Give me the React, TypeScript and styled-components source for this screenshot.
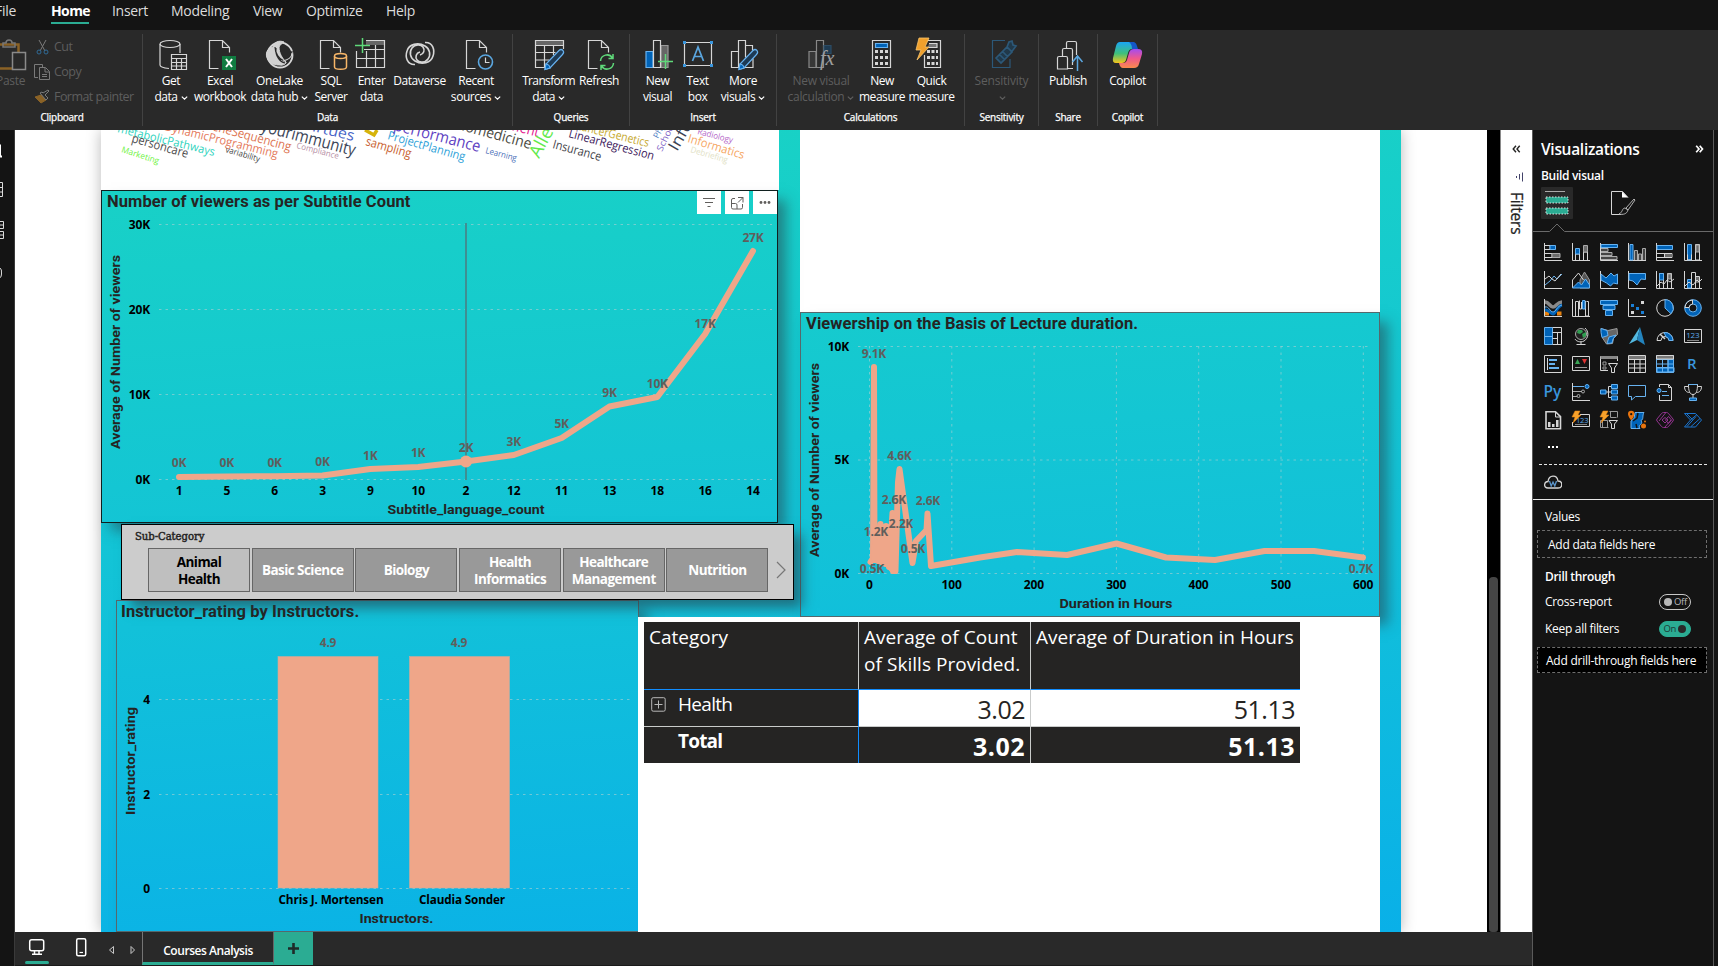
import React from "react";
import styled, { createGlobalStyle } from "styled-components";

const GlobalStyle = createGlobalStyle`
  * { box-sizing: border-box; }
  html, body { margin: 0; background: #141414; overflow: hidden; }
  body { font-family: "Open Sans", "Noto Sans", sans-serif; }
  svg { display: block; }
`;

const ui = `"Open Sans", "Noto Sans", sans-serif`;
const din = `Roboto, "Liberation Sans", sans-serif`;
const L = "#d6d6d6";
const B = "#0063b8";
const C = "#67b2f0";
const G = "#6b6b6b";
const salmon = "#efa689";

/* ---------- shell ---------- */
const Shell = styled.div`
  width: 1718px;
  height: 966px;
  display: flex;
  flex-direction: column;
  overflow: hidden;
  background: #141414;
`;
const MenuBar = styled.nav`
  height: 30px;
  flex: none;
  display: flex;
  background: #141414;
  color: #dcdcdc;
  font-size: 14px;
`;
const MenuItem = styled.span<{ $ml: number; $w: number; $ls?: number; $on?: boolean }>`
  display: block;
  margin-left: ${(p) => p.$ml}px;
  width: ${(p) => p.$w}px;
  height: 24px;
  line-height: 21px;
  white-space: nowrap;
  letter-spacing: ${(p) => p.$ls ?? -0.3}px;
  font-weight: ${(p) => (p.$on ? 700 : 400)};
  color: ${(p) => (p.$on ? "#fff" : "#dcdcdc")};
  border-bottom: 2px solid ${(p) => (p.$on ? "#2bac93" : "transparent")};
`;
const Ribbon = styled.div`
  height: 100px;
  flex: none;
  display: flex;
  background: #292929;
  z-index: 5;
`;
const Group = styled.section<{ $w: number }>`
  width: ${(p) => p.$w}px;
  flex: none;
  height: 92px;
  margin-top: 4px;
  border-right: 1px solid #424242;
  display: flex;
  flex-direction: column;
`;
const GroupTools = styled.div<{ $pl: number }>`
  height: 75px;
  display: flex;
  padding-left: ${(p) => p.$pl}px;
`;
const GroupName = styled.div<{ $shift?: number }>`
  font-size: 10px;
  line-height: 17px;
  text-align: center;
  color: #fff;
  letter-spacing: -0.25px;
  -webkit-text-stroke: 0.25px #fff;
  margin-left: ${(p) => p.$shift ?? 0}px;
`;
const Tool = styled.div<{ $w: number; $dim?: boolean; $dx?: number }>`
  width: ${(p) => p.$w}px;
  flex: none;
  display: flex;
  flex-direction: column;
  align-items: center;
  color: ${(p) => (p.$dim ? "#5e5e5e" : "#fff")};
  svg.i {
    margin-top: 5px;
    margin-left: ${(p) => (p.$dx ?? 0) * 2}px;
    flex: none;
  }
`;
const ToolText = styled.div<{ $ls?: number }>`
  margin-top: 2px;
  font-size: 12px;
  line-height: 16px;
  letter-spacing: ${(p) => p.$ls ?? -0.45}px;
  text-align: center;
  white-space: nowrap;
`;
const Chev = styled.svg`
  display: inline-block;
  vertical-align: 1px;
  margin-left: 3px;
`;
const Chevron = () => (
  <Chev width="7" height="4" viewBox="0 0 7 4"><path d="M.8.6l2.700 2.500L6.200.6" fill="none" stroke="currentColor" strokeWidth="1.200" /></Chev>
);
const ClipCol = styled.div`
  padding-left: 6px;
  display: flex;
  flex-direction: column;
`;
const ClipRow = styled.div`
  height: 26px;
  display: flex;
  align-items: center;
  gap: 3px;
  font-size: 12.500px;
  letter-spacing: -0.55px;
  color: #5e5e5e;
  white-space: nowrap;
`;
const Paste = styled.div`
  width: 28px;
  overflow: hidden;
  font-size: 12px;
  color: #5e5e5e;
  svg { margin-top: 5px; }
`;
const PasteText = styled.div`
  margin: 2px 0 0 -4px;
  line-height: 16px;
  letter-spacing: -0.3px;
`;

const Icon = ({ children, w = 30, h = 32, o = 1 }: { children: React.ReactNode; w?: number; h?: number; o?: number }) => (
  <svg className="i" width={w} height={h} viewBox={`0 0 ${w} ${h}`} fill="none" stroke={L} strokeWidth="1.2" opacity={o} overflow="visible">{children}</svg>
);
const Doc = () => <path d="M12.5 29.5H3.5V1.5h13l7 7v5M16.500 1.500v7h7" />;

/* ---------- body ---------- */
const Body = styled.div`
  flex: 1;
  min-height: 0;
  display: flex;
`;
const Rail = styled.aside`
  width: 15px;
  flex: none;
  background: #141414;
  border-right: 1px solid #3a3a3a;
`;
const Center = styled.div`
  width: 1517px;
  flex: none;
  display: flex;
  flex-direction: column;
`;
const Work = styled.div`
  height: 802px;
  display: flex;
`;
const Canvas = styled.main`
  width: 1472px;
  flex: none;
  background: #fff;
  padding-left: 86px;
  overflow: hidden;
`;
const Scroll = styled.div`
  width: 13px;
  flex: none;
  background: #000;
  padding: 447px 2px 0 2px;
`;
const Thumb = styled.div`
  height: 355px;
  border-radius: 4px 4px 3px 3px;
  background: #454545;
`;
const Filters = styled.aside`
  width: 32px;
  flex: none;
  background: #fff;
  border-left: 1px solid #8a8a8a;
  display: flex;
  flex-direction: column;
  align-items: center;
  padding-top: 15px;
`;
const FilterGlyph = styled.svg`
  margin: 19px 0 0 6px;
`;
const FiltersText = styled.div`
  writing-mode: vertical-rl;
  font-size: 15.500px;
  line-height: 20px;
  color: #252423;
  margin: 10px 0 0 1px;
  letter-spacing: -0.2px;
  -webkit-text-stroke: 0.25px #252423;
`;
const Page = styled.div`
  width: 1300px;
  height: 802px;
  display: flex;
  background: linear-gradient(176deg, #19d3c4 0%, #12c1d9 56%, #09b0e8 100%);
  box-shadow: 0 0 14px rgba(0, 0, 0, 0.28);
`;
const LeftCol = styled.div`
  width: 699px;
  flex: none;
`;
const RightCol = styled.div`
  width: 580px;
  flex: none;
`;
const Cloud = styled.div`
  width: 678px;
  height: 60px;
  background: #fff;
  overflow: hidden;
`;
const Card = styled.section<{ $w: number; $h: number; $ml?: number; $dark?: boolean }>`
  position: relative;
  width: ${(p) => p.$w}px;
  height: ${(p) => p.$h}px;
  margin-left: ${(p) => p.$ml ?? 0}px;
  border: 1px solid ${(p) => (p.$dark ? "#10201f" : "#56686c")};
  box-shadow: 9px 9px 12px -1px rgba(40, 60, 70, 0.5);
`;
const CardTitle = styled.h2<{ $pl: number }>`
  margin: 0;
  height: 22px;
  line-height: 22px;
  padding-left: ${(p) => p.$pl}px;
  font-family: ${din};
  font-weight: 700;
  font-size: 16.500px;
  letter-spacing: 0.1px;
  color: #252423;
  white-space: nowrap;
`;
const HeaderTools = styled.div`
  position: absolute;
  top: 0;
  right: 0;
  display: flex;
  gap: 4px;
`;
const HeaderBtn = styled.div`
  width: 24px;
  height: 23px;
  background: #fff;
`;
const Slicer = styled.section`
  position: relative;
  z-index: 1;
  width: 673px;
  height: 76px;
  margin: 1px 0 0 20px;
  background: #ccc;
  border: 1px solid #000;
  box-shadow: 9px 9px 12px -1px rgba(40, 60, 70, 0.6);
`;
const SlicerName = styled.div`
  height: 23px;
  padding: 4px 0 0 13px;
  font-family: "DejaVu Serif Condensed", "DejaVu Serif", serif;
  font-stretch: condensed;
  font-size: 11.200px;
  line-height: 16px;
  letter-spacing: -0.05px;
  color: #252423;
  -webkit-text-stroke: 0.45px #252423;
`;
const Tiles = styled.div`
  display: flex;
  gap: 1.700px;
  padding-left: 26px;
  align-items: center;
`;
const Tile = styled.div<{ $on?: boolean }>`
  width: 102px;
  height: 44px;
  flex: none;
  display: flex;
  align-items: center;
  justify-content: center;
  text-align: center;
  border: 1px solid #666;
  background: ${(p) => (p.$on ? "#bfbfbf" : "#999")};
  color: ${(p) => (p.$on ? "#000" : "#fff")};
  font-size: 13.500px;
  line-height: 17px;
  padding-top: 1px;
  font-weight: 700;
  letter-spacing: -0.55px;
  white-space: pre;
`;
const Blank = styled.div`
  height: 182px;
  background: #fff;
`;
const Sheet = styled.div`
  position: relative;
  z-index: 2;
  width: 742px;
  height: 315px;
  margin-left: -162px;
  padding: 5px 0 0 6px;
  background: #fff;
`;
const Matrix = styled.div`
  width: 656px;
  display: grid;
  grid-template-columns: 215px 172px 269px;
  grid-template-rows: 68px 37px 36px;
  color: #fff;
`;
const selection = "#118dff";
const grey = "#c9cbca";
const Cell = styled.div<{ $white?: boolean; $num?: boolean; $bold?: boolean; $ls?: number; $bottom?: string; $right?: string; $pl?: number }>`
  background: ${(p) => (p.$white ? "#fff" : "#252423")};
  color: ${(p) => (p.$white ? "#252423" : "#fff")};
  border-style: solid;
  border-width: 0 ${(p) => (p.$right ? 1 : 0)}px ${(p) => (p.$bottom ? 1 : 0)}px 0;
  border-color: transparent ${(p) => p.$right ?? "transparent"} ${(p) => p.$bottom ?? "transparent"} transparent;
  text-align: ${(p) => (p.$num ? "right" : "left")};
  font-size: ${(p) => (p.$num ? 25 : 19)}px;
  line-height: ${(p) => (p.$num ? 38 : 27)}px;
  padding: ${(p) => (p.$num ? "0 5px 0 0" : `1px 0 0 ${p.$pl ?? 5}px`)};
  letter-spacing: ${(p) => p.$ls ?? -0.5}px;
  font-weight: ${(p) => (p.$bold ? 700 : 400)};
  white-space: pre;
  overflow: hidden;
`;
const ColHead = styled.span`
  display: block;
  padding-top: 1px;
`;
const RowHead = styled.span`
  display: flex;
  align-items: center;
  gap: 12px;
`;

/* ---------- footer ---------- */
const Footer = styled.footer`
  height: 34px;
  display: flex;
  background: #292929;
  border-bottom: 1px solid #1a1a1a;
`;
const ViewBtns = styled.div`
  width: 127px;
  flex: none;
`;
const PageTab = styled.div`
  width: 132px;
  flex: none;
  border-left: 1px solid #757575;
  border-right: 1px solid #666;
  border-bottom: 3px solid #2bac93;
  text-align: center;
  font-size: 12px;
  font-weight: 600;
  line-height: 37px;
  letter-spacing: -0.45px;
  color: #fff;
`;
const AddTab = styled.div`
  width: 39px;
  flex: none;
  background: #2bac93;
`;

/* ---------- visualizations pane ---------- */
const Viz = styled.aside`
  width: 182px;
  flex: none;
  background: #141414;
  border-left: 1px solid #5a5a5a;
  border-right: 1px solid #5a5a5a;
  color: #fff;
  display: flex;
  flex-direction: column;
`;
const VizHead = styled.div`
  display: flex;
  justify-content: space-between;
  align-items: center;
  height: 38px;
  padding: 0 9px 0 8px;
  font-size: 15.500px;
  font-weight: 600;
  letter-spacing: -0.3px;
`;
const VizSub = styled.div`
  height: 19px;
  padding-left: 8px;
  font-size: 12px;
  font-weight: 600;
  line-height: 16px;
  letter-spacing: -0.3px;
`;
const VizGrid = styled.div`
  display: grid;
  grid-template-columns: repeat(6, 28px);
  grid-auto-rows: 28px;
  padding: 11px 0 0 11px;
  height: 208px;
`;
const More = styled.div`
  height: 27px;
  margin-top: -3px;
`;
const Dash = styled.div`
  margin: 0 6px;
  height: 1px;
  background: repeating-linear-gradient(90deg, #e8e8e8 0 3px, transparent 3px 5px);
`;
const CloudRow = styled.div`
  height: 35px;
  padding: 10px 0 0 11px;
  border-bottom: 1px solid #e8e8e8;
`;
const FieldLabel = styled.div<{ $b?: boolean; $mt: number }>`
  margin-top: ${(p) => p.$mt}px;
  padding-left: 12px;
  font-size: 12px;
  line-height: 16px;
  font-weight: ${(p) => (p.$b ? 600 : 400)};
  letter-spacing: -0.3px;
`;
const Well = styled.div<{ $black?: boolean; $mt: number }>`
  margin: ${(p) => p.$mt}px 6px 0 4px;
  height: ${(p) => (p.$black ? 26 : 28)}px;
  padding-left: ${(p) => (p.$black ? 8 : 10)}px;
  border: 1px dashed #6e6e6e;
  background: ${(p) => (p.$black ? "#000" : "transparent")};
  font-size: 12px;
  line-height: ${(p) => (p.$black ? 26 : 28)}px;
  letter-spacing: -0.25px;
  white-space: nowrap;
`;
const Switches = styled.div`
  padding-top: 3px;
`;
const SwitchRow = styled.div`
  height: 27px;
  padding: 0 22px 0 12px;
  display: flex;
  align-items: center;
  justify-content: space-between;
  font-size: 12px;
  letter-spacing: -0.3px;
`;
const Switch = styled.span<{ $on?: boolean }>`
  width: 32px;
  height: 16px;
  display: flex;
  flex-direction: ${(p) => (p.$on ? "row-reverse" : "row")};
  align-items: center;
  justify-content: flex-start;
  gap: 2px;
  padding: 0 4px;
  border-radius: 8px;
  border: 1px solid ${(p) => (p.$on ? "#2bac93" : "#c8c8c8")};
  background: ${(p) => (p.$on ? "#2bac93" : "transparent")};
  color: ${(p) => (p.$on ? "#1c3a35" : "#b8b8b8")};
  font-size: 9.500px;
  letter-spacing: -0.3px;
  &::before {
    content: "";
    width: 8px;
    height: 8px;
    flex: none;
    border-radius: 50%;
    background: ${(p) => (p.$on ? "#292929" : "#b8b8b8")};
  }
`;

/* ---------- word cloud ---------- */
type W = [string, number, number, number, number, number, string];
const words: W[] = [
  ["metabolicPathways", 16, 2, 113, 26, 11.5, "#2ed3bd"],
  ["personcare", 30, 12, 86, 28, 12.5, "#4c4c4c"],
  ["Marketing", 20, 22, 57, 34, 8.5, "#6cf23c"],
  ["DynamicProgramming", 63, 0, 176, 28, 12, "#e57a5c"],
  ["variability", 124, 22, 158, 32, 8.5, "#444"],
  ["GeneSequencing", 103, -2, 189, 21, 12.5, "#dd7350"],
  ["Compliance", 195, 18, 237, 29, 8.5, "#b78fa5"],
  ["yourimmunity", 159, 1, 253, 26, 17, "#3c4658"],
  ["virtues", 203, -1, 252, 11, 15, "#4a66c8"],
  ["ProjectPlanning", 286, 9, 363, 31, 12, "#2d9fd8"],
  ["sampling", 264, 15, 309, 28, 12.5, "#c8602e"],
  ["performance", 292, 0, 378, 22, 16, "#5e3fc2"],
  ["Learning", 384, 23, 415, 31, 8.5, "#4b70b8"],
  ["biomedicine", 352, -2, 429, 19, 15, "#4c4c44"],
  ["Treatment", 376, -9, 437, 7, 15, "#e4148f"],
  ["Allergy", 438, 29, 466, -22, 18, "#62ea4c"],
  ["Insurance", 451, 18, 499, 31, 12.5, "#44444a"],
  ["LinearRegression", 467, 7, 552, 30, 12, "#401a5c"],
  ["CancerGenetics", 474, -1, 547, 17, 12, "#c6a92e"],
  ["Schools", 561, 22, 576, -10, 9, "#7a5cc4"],
  ["Physics", 557, 9, 571, -17, 8.5, "#4d80c4"],
  ["Infection", 576, 22, 612, -40, 16, "#3a4354"],
  ["Radiology", 596, 4, 631, 13, 8.5, "#b465c8"],
  ["Informatics", 586, 12, 642, 29, 12, "#f6a662"],
  ["Debriefing", 589, 22, 626, 33, 8.5, "#e2dfc6"],
];
const WordCloud = () => (
  <svg width="678" height="60" fontFamily={ui}>
    {words.map(([t, x1, y1, x2, y2, s, c]) => (
      <text key={t} fontSize={s} fill={c} textLength={Math.hypot(x2 - x1, y2 - y1)} lengthAdjust="spacingAndGlyphs"
        transform={`translate(${x1} ${y1}) rotate(${(Math.atan2(y2 - y1, x2 - x1) * 180) / Math.PI})`}>{t}</text>
    ))}
    <path d="M264 0l9 5 3-5" stroke="#d6b30a" strokeWidth="3.500" fill="none" />
  </svg>
);

/* ---------- charts ---------- */
const ChartSvg = styled.svg`
  font-family: ${ui};
  font-size: 12px;
  font-weight: 700;
  overflow: visible;
  .grid { stroke: #a5cfd2; stroke-opacity: 0.65; stroke-dasharray: 2.5 4; stroke-width: 1; fill: none; }
  .axis { fill: #000; letter-spacing: -0.15px; }
  .val { fill: #605e5c; text-anchor: middle; letter-spacing: -0.2px; }
  .name { fill: #252423; text-anchor: middle; font-family: ${din}; font-size: 13.500px; }
  .mid { text-anchor: middle; }
  .end { text-anchor: end; }
`;
const subs: [string, string, number, number][] = [
  ["1", "0K", 477, 467], ["5", "0K", 476.6, 467], ["6", "0K", 476.2, 467], ["3", "0K", 475.5, 466],
  ["9", "1K", 469, 460], ["10", "1K", 467, 457], ["2", "2K", 461.5, 452], ["12", "3K", 455, 446],
  ["11", "5K", 438, 428], ["13", "9K", 406.5, 397], ["18", "10K", 397, 388], ["16", "17K", 334, 328], ["14", "27K", 251, 242],
];
const sx = (i: number) => 179 + i * 47.83;
const SubtitleChart = () => (
  <ChartSvg width="675" height="308" viewBox="102 213 675 308">
    {[224.500, 309.500, 394.500, 479.500].map((y, i) => (
      <g key={y}>
        <path className="grid" d={`M159 ${y}H772`} />
        <text className="axis end" x="150" y={y + 4}>{`${30 - i * 10}K`}</text>
      </g>
    ))}
    <path d="M466 223V480" stroke="#3f8f92" strokeWidth="2" />
    <polyline points={subs.map((s, i) => `${sx(i)},${s[2]}`).join(" ")} fill="none" stroke={salmon} strokeWidth="6" strokeLinejoin="round" strokeLinecap="round" />
    <circle cx="466" cy="461.5" r="6" fill={salmon} />
    {subs.map((s, i) => (
      <g key={s[0]}>
        <text className="val" x={sx(i)} y={s[3]}>{s[1]}</text>
        <text className="axis mid" x={sx(i)} y="495">{s[0]}</text>
      </g>
    ))}
    <text className="name" x="466" y="514" textLength="157" lengthAdjust="spacingAndGlyphs">Subtitle_language_count</text>
    <text className="name" transform="translate(120 352) rotate(-90)" textLength="194" lengthAdjust="spacingAndGlyphs">Average of Number of viewers</text>
  </ChartSvg>
);

const DurationChart = () => (
  <ChartSvg width="578" height="280" viewBox="801 335 578 280">
    {[346.500, 460, 573.500].map((y, i) => (
      <g key={y}>
        <path className="grid" d={`M858 ${y}H1370`} />
        <text className="axis end" x="849" y={y + 4}>{["10K", "5K", "0K"][i]}</text>
      </g>
    ))}
    {[0, 1, 2, 3, 4, 5, 6].map((i) => (
      <g key={i}>
        <path className="grid" d={`M${869.500 + i * 82.3} 346V573`} />
        <text className="axis mid" x={869.300 + i * 82.3} y="589">{i * 100}</text>
      </g>
    ))}
    <polyline fill="none" stroke={salmon} strokeWidth="6" strokeLinejoin="round" strokeLinecap="round"
      points="870.5,562 873,558 874,367 874.5,560 877,530 878,561 880.5,524 881,562 883,540 885.5,564 886,526 889,567 892.5,513 893,571 896,530 895.5,571 898,482 899.5,469 912.5,563 916,541 926.5,530 927.5,513.5 931,566 980,557.5 1017,552 1067,555 1116.5,543.5 1166,557.5 1215,560 1264.5,551 1314,551 1363,557.5" />
    <path d="M871 560L873 530h4l4 -6 6 2 5 -5 6 0 -1 53h-5l-6 -7-6 -3-4 -3z" fill={salmon} />
    {([["9.1K", 874, 358], ["4.6K", 899.5, 460], ["2.6K", 894, 504], ["2.6K", 928, 505], ["2.2K", 901, 528], ["1.2K", 876, 536], ["0.5K", 913, 553], ["0.5K", 872, 573], ["0.7K", 1361, 573]] as [string, number, number][]).map(([t, x, y]) => (
      <text key={`${t}${x}`} className="val" x={x} y={y}>{t}</text>
    ))}
    <text className="name" x="1116" y="608" textLength="113" lengthAdjust="spacingAndGlyphs">Duration in Hours</text>
    <text className="name" transform="translate(819 460) rotate(-90)" textLength="194" lengthAdjust="spacingAndGlyphs">Average of Number of viewers</text>
  </ChartSvg>
);

const RatingChart = () => (
  <ChartSvg width="520" height="308" viewBox="117 623 520 308">
    {[699.500, 794.500, 888.500].map((y, i) => (
      <g key={y}>
        <path className="grid" d={`M159 ${y}H631`} />
        <text className="axis end" x="150" y={y + 4}>{4 - i * 2}</text>
      </g>
    ))}
    <rect x="278" y="656.500" width="100" height="231.500" fill={salmon} stroke="#c9ab9c" strokeWidth=".6" />
    <rect x="409.500" y="656.500" width="100" height="231.500" fill={salmon} stroke="#c9ab9c" strokeWidth=".6" />
    <text className="val" x="328" y="647">4.9</text>
    <text className="val" x="459" y="647">4.9</text>
    <text className="axis mid" x="331" y="904" textLength="105" lengthAdjust="spacingAndGlyphs">Chris J. Mortensen</text>
    <text className="axis mid" x="462" y="904" textLength="86" lengthAdjust="spacingAndGlyphs">Claudia Sonder</text>
    <text className="name" x="396.500" y="923" textLength="74" lengthAdjust="spacingAndGlyphs">Instructors.</text>
    <text className="name" transform="translate(135 761) rotate(-90)" textLength="108" lengthAdjust="spacingAndGlyphs">Instructor_rating</text>
  </ChartSvg>
);

/* ---------- visual gallery icons, 18x18 ---------- */
const ax = <path d="M.5 0v17.500H18" stroke={L} />;
const bolt = <path d="M3 0h5L6 4h3L1 12l2-6H0z" fill="#f7a12b" stroke="#e8820e" strokeWidth=".5" />;
const num = (x: number, y: number, s: number) => <text x={x} y={y} fontFamily={ui} fontSize={s} fill="#5aa9ea" stroke="none" letterSpacing="-.2">123</text>;
const gallery: React.ReactNode[] = [
  <>{ax}<path d="M1 2.500h5v4H1M1 10.500h7v4H1" stroke={L} /><path d="M6 2.500h5.500v4H6z" fill={B} stroke={C} /><path d="M8 10.500h8v4H8z" fill={G} stroke="#aaa" /></>,
  <>{ax}<path d="M3.500 17v-6h4v6M11.500 17v-8h4v8" stroke={L} /><path d="M3.500 5.500h4V11h-4z" fill={B} stroke={C} /><path d="M11.500 2.500h4V9h-4z" fill={G} stroke="#aaa" /></>,
  <>{ax}<path d="M1 1.500h16.500v3H1z" fill={B} stroke={C} /><path d="M1 5.500h7v3H1M1 9.500h11v3H1M1 13.500h16v3H1" fill="#444" stroke="#aaa" /></>,
  <>{ax}<path d="M2 1.500h3V17H2z" fill={B} stroke={C} /><path d="M6.500 17V7.500h3V17M10.500 17v-6h3v6M14.500 17V5.500h3V17" fill="#444" stroke="#aaa" /></>,
  <>{ax}<path d="M1 2.500h15.500v4H1z" fill={B} stroke={C} /><path d="M1 10.500h15v4H1M8.500 10.500v4" stroke={L} /><path d="M9 11h7v3H9z" fill={G} stroke="none" /></>,
  <>{ax}<path d="M3.500 1.500h4V17h-4z" fill={B} stroke={C} /><path d="M3.500 11.500v5.500h4v-5.500M11.500 1.500h4V17h-4z" stroke={L} /><path d="M12 2h3v7h-3z" fill={G} stroke="#aaa" /></>,
  <>{ax}<path d="M1 14l5-4 4-5 3 3 5-5" stroke={C} /><path d="M1 8l4-3 3 3 3 2 6-7" stroke={L} /></>,
  <><path d="M8 17V9l4.500-8L17.500 9v8z" fill="#555" stroke="#999" /><path d="M.5 17V9l6-7 5 7" stroke={L} /><path d="M.5 17l6-6 3 3 4-6 4 6v3z" fill={B} stroke={C} /></>,
  <>{ax}<path d="M1 3l5 4 5-5 3 3 3.500-2v10l-4-1-3 3-4-3-5.500-3z" fill={B} stroke={C} /></>,
  <>{ax}<path d="M1 2.500h16.500v6L13 8l-4 6-4-4-4-1z" fill={B} stroke={C} /></>,
  <>{ax}<path d="M3.500 17V2.500h4V17M11.500 17V2.500h4V17" stroke={L} /><path d="M3.500 2.500h4V9h-4z" fill={B} stroke={C} /><path d="M12 3h3v5h-3z" fill={G} stroke="#aaa" /><path d="M1 15l4-4 3 2 3-4 3 2 4-3" stroke={L} /></>,
  <>{ax}<path d="M3.500 17V8.500h4V17z" fill={B} stroke={C} /><path d="M7.500 17V1.500h4V17M11.500 5.500h4V17" stroke={L} /><path d="M12 6h3v6h-3z" fill={G} stroke="none" /><path d="M1 15l4-4 4 3 4-5 2 2 3-3" stroke={L} /></>,
  <>{ax}<path d="M1 14.500h4M13 14.500h4.500" stroke="#e8820e" strokeWidth="4" /><path d="M1 11c4-1 5 4 8 4s4-8 9-9" stroke={B} strokeWidth="3" /><path d="M1 8c4-1 5 5 8 5s4-6 9-7" stroke={C} /><path d="M1 3c4 0 5 5 8 5s4-5 9-5" stroke="#8a8a8a" strokeWidth="3.500" /></>,
  <>{ax}<path d="M3.500 17V2.500h3V17M7.500 1.500V10h2V3M14.500 2.500h2V17h-3V2" stroke={L} /><path d="M10.500 1.500h2.500V10h-2.500z" fill={B} stroke={C} /></>,
  <><path d="M.5 1.500h17v4H.5zM3 6.500h12v4H3zM5.500 11.500h7v5h-7z" fill={B} stroke={C} /></>,
  <>{ax}<path d="M3 5h3v3H3zM8 8h3v3H8zM13 12h3v3h-3z" fill="#1a7fd6" stroke="none" /><path d="M13 2h3v3h-3zM3 12h3v3H3z" fill={L} stroke="none" /></>,
  <><circle cx="9" cy="9" r="8.300" stroke={L} /><path d="M9 .7a8.300 8.300 0 0 1 6 14L9 9z" fill={B} stroke={C} /></>,
  <><circle cx="9" cy="9" r="6.300" stroke={B} strokeWidth="4" /><circle cx="9" cy="9" r="8.300" stroke={C} /><circle cx="9" cy="9" r="4" stroke={C} /><path d="M1 8.500h4A4 4 0 0 1 8.500 5V1A8 8 0 0 0 1 8.500" fill="#141414" stroke={L} /></>,
  <><path d="M.5.500h8v17h-8z" fill={B} stroke={C} /><path d="M.5 9.500h8" stroke={C} /><path d="M8.500.5h9v17h-9M8.500 5.500h9M13.500 5.500v12M8.500 11.500h5" stroke={L} /></>,
  <><circle cx="9" cy="7" r="5.500" fill="#222" stroke="#aaa" /><path d="M6 3l4 0 1 2-3 2-3-1zM10 7l4-2v4l-3 2z" fill="#2f9e50" stroke="none" /><path d="M13 1a8 8 0 0 1-1 13c-4 2-8 0-9-2M9 14.500v3M4.500 17.500h9" stroke={L} /></>,
  <><path d="M1 1.500l7 2 9-2 .5 6-4 4-1 5-6 .5-4-6z" fill="#666" stroke="#999" /><path d="M1 1.500l6 2 1 5-6 2-1-5zM9 10l7-2-3 4-1 4-5 .5z" fill={B} stroke={C} /></>,
  <><path d="M12 0L1 17l8-4z" fill="#53b9e0" stroke="none" /><path d="M12 0l5 18-8-5z" fill="#2384be" stroke="none" /></>,
  <><path d="M1 13.500a8 8 0 0 1 16 0h-4a4 4 0 0 0-8 0z" stroke={L} /><path d="M8 5.600a8 8 0 0 1 9 7.900h-4a4 4 0 0 0-3-3.700z" fill={B} stroke={C} /><path d="M4 7l5 5" stroke={L} strokeWidth="1.500" /></>,
  <><path d="M.5 2.500h17v13H.5z" stroke={L} /><path d="M3 13.500h12" stroke="#888" />{num(2.2, 11.3, 8)}</>,
  <><path d="M.5.500h17v17H.5z" stroke={L} /><path d="M3.500 3v12" stroke={L} /><path d="M5 5h8M5 9h6M5 13h10" stroke={C} strokeWidth="2" /></>,
  <><path d="M.5 1.500h17v14H.5z" stroke={L} /><path d="M3 9l2.500-5L8 9z" fill="#3aa655" stroke="none" /><path d="M10 4h5l-2.500 5z" fill="#e03232" stroke="none" /><path d="M3 12.500h12" stroke="#999" /></>,
  <><path d="M8 15.500H.5V1.500h17V6" stroke={L} /><path d="M.5 1h17v3H.5z" fill="#888" stroke="none" /><path d="M3 7h3v3H3zM3 12h3v2H3z" stroke="#999" /><path d="M8.500 8.500h9L14.500 13v4.500h-3V13z" stroke={L} /></>,
  <><path d="M.5.500h17v17H.5zM.5 4.500h17M.5 9h17M.5 13h17M6.500 4v13M12 4v13" stroke={L} /><path d="M1 1h16v3H1z" fill="#777" stroke="none" /></>,
  <><path d="M1 12.500h17V17H1zM12 4.500h5.500V17H12z" fill={B} stroke={C} /><path d="M.5.500h17v17H.5zM.5 4.500h17M.5 9h17M.5 13h17M6.500 4v13M12 4v13" stroke={C} /><path d="M.5.500h17v3.500H.5z" fill="#777" stroke={L} /></>,
  <text x="3" y="14" fontFamily={ui} fontSize="15" fontWeight="600" fill="#3a96dd" stroke="none">R</text>,
  <text x="-.5" y="13.500" fontFamily={ui} fontSize="15.500" fontWeight="600" fill="#3a96dd" stroke="none">Py</text>,
  <>{ax}<path d="M1 3.500h11M1 8.500h9M1 13.500h4" stroke="#aaa" /><path d="M1 3.500h11" stroke={C} /><circle cx="15" cy="3.500" r="2" fill={B} stroke={C} /><circle cx="11" cy="8.500" r="1.500" stroke="#aaa" /><circle cx="6.500" cy="13" r="1.500" stroke="#aaa" /></>,
  <><path d="M6 9h5M11 3.500H8.500v11H11" stroke={L} /><path d="M.5 7h5.500v4H.5zM11.500 1.500h6v4h-6zM11.500 7h6v4h-6zM11.500 13h6v4h-6z" fill={B} stroke={C} /></>,
  <path d="M.5 2.500h17v11h-10l-4 3.500v-3.500h-3z" stroke={C} />,
  <><path d="M3.500 4V1.500h9l3 3v13h-12V12M12.500 1.500v3h3" stroke={L} /><circle cx="3" cy="7.500" r="2" fill={B} stroke={C} /><path d="M6 8.500h5M6 12.500h7" stroke={C} /></>,
  <><path d="M4.500 1.500h9c0 6-1 10-4.500 10s-4.500-4-4.500-10zM4.500 3.500h-4c0 4 2 6 5 6M13.500 3.500h4c0 4-2 6-5 6M9 11.500V15" stroke={L} /><path d="M5.500 15h7v2.500h-7z" fill={B} stroke={C} /><path d="M4.500 1.500h9" stroke={C} /></>,
  <><path d="M2 .7h9.500l5 5v12H2z" stroke={L} strokeWidth="1.600" /><path d="M11.500 1v5h5" stroke={L} /><path d="M4 11h2.500v5H4zM8 13h2.500v3H8zM12 9h2.500v7H12z" fill={L} stroke="none" /></>,
  <><path d="M8 3.500h9.500v12H.5V11" stroke={L} /><path d="M3 13.500h12" stroke="#888" />{num(4, 12, 7.500)}{bolt}</>,
  <><path d="M9.500.5h8v6M2.500 9.500v7h6M.5 9.500h7v7h-7zM10.500.5v6h6" stroke="#999" /><path d="M9 9.500h8.500L14.500 13v4.500h-3V13z" stroke={L} />{bolt}</>,
  <><path d="M3 10V17.500h9c-3-4 4-4 1-8 3-1 1-5 3-8H7l-1 6z" fill={B} stroke={C} /><path d="M10 2l-1 5-4 3M9 17l-1-4" stroke="#141414" strokeWidth="1.500" /><path d="M0 3a3.200 3.200 0 0 1 6.400 0C6.400 5.500 3.200 9.500 3.200 9.500S0 5.500 0 3z" fill="#e8740e" stroke="none" /><circle cx="3.200" cy="3.200" r="1.100" fill="#141414" stroke="none" /><circle cx="15.500" cy="15" r="2.500" fill="#e8740e" stroke="none" /><circle cx="17" cy="10.500" r="1" fill="#e8740e" stroke="none" /></>,
  <g stroke="#93338f"><path d="M7.500 1.500h3q1 0 2 1l4.500 5.500q.8 1 0 2l-4.500 5.500q-1 1-2 1h-3q-1 0-2-1L1 10q-.8-1 0-2l4.500-5.500q1-1 2-1zM3 10l6.500-8M9 16l6-7" /><path d="M9 6.500L6 9l3 3 3-3zM12.500 5.500l3 3.500-3 3.500-3-3.500z" /></g>,
  <path d="M.5 2.500h11l6 6.500-6 7H.5l6-7zM6.500 9L13 3.500M3 15.500l9-10M7 15.500l9-8M2.500 2.500l6 6" stroke="#1a76d2" />,
];

const VizIcon = ({ children }: { children: React.ReactNode }) => (
  <svg width="18" height="18" viewBox="0 0 18 18" fill="none" strokeWidth="1" overflow="visible">{children}</svg>
);

const pencil = (
  <g>
    <path d="M24 11.500q2-2 4 0 1.500 2-.5 4L15 29l-5 1.500 1-5.500z" fill="#1d3a55" stroke={C} />
    <path d="M10 30.500l1-5.500q3.500.5 4 4z" fill={B} stroke={C} />
  </g>
);

export default function App() {
  return (
    <Shell>
      <GlobalStyle />
      <MenuBar>
        <MenuItem $ml={-5} $w={23}>File</MenuItem>
        <MenuItem $ml={33} $w={38} $on $ls={-0.6}>Home</MenuItem>
        <MenuItem $ml={23} $w={35}>Insert</MenuItem>
        <MenuItem $ml={24} $w={59}>Modeling</MenuItem>
        <MenuItem $ml={23} $w={30}>View</MenuItem>
        <MenuItem $ml={23} $w={57}>Optimize</MenuItem>
        <MenuItem $ml={23} $w={30}>Help</MenuItem>
      </MenuBar>

      <Ribbon>
        <Group $w={143}>
          <GroupTools $pl={0}>
            <Paste>
              <svg width="28" height="32" fill="none" strokeWidth="1.500"><path d="M-5 5.500h23.500V14M-5 29.500h17" stroke="#8a6226" strokeWidth="2.500" /><path d="M3 8V4h3c0-4 6-4 6 0h3v4z" stroke="#777" /><path d="M12.500 13.500h13v17h-13z" fill="#292929" stroke="#8a8a8a" /></svg>
              <PasteText>Paste</PasteText>
            </Paste>
            <ClipCol>
              <ClipRow>
                <svg width="17" height="16" fill="none"><path d="M5 1l6 11M12 1L6 12" stroke="#7a7a7a" /><circle cx="5" cy="13" r="2" stroke="#2f6a96" /><circle cx="12" cy="13" r="2" stroke="#2f6a96" /></svg>Cut
              </ClipRow>
              <ClipRow>
                <svg width="17" height="16" fill="none" stroke="#7a7a7a"><path d="M4 13.500H.5V.5h8V3" /><path d="M5.500 3.500h6l4 4v8h-10zM11 4v4h4M8 10.500h5M8 12.500h5" /></svg>Copy
              </ClipRow>
              <ClipRow>
                <svg width="17" height="16" fill="none" stroke="#7a7a7a"><path d="M1 8l6 6 5-3-5-5z" fill="#8a6226" stroke="#8a6226" /><path d="M6 4l6 7 2-2-3-3 4-4-1-1-5 3-1-1z" fill="#292929" /></svg>Format painter
              </ClipRow>
            </ClipCol>
          </GroupTools>
          <GroupName $shift={-18}>Clipboard</GroupName>
        </Group>

        <Group $w={370}>
          <GroupTools $pl={7}>
            <Tool $w={42} $dx={2}>
              <Icon><ellipse cx="12" cy="5" rx="10" ry="3.500" /><path d="M2 5v21c0 2 4 3 9 3.500M22 5v9" /><path d="M13.500 15.500h15v15h-15zM13.500 19.500h15M13.500 23.500h15M13.500 27h15M18.500 19v11M23.500 19v11" /></Icon>
              <ToolText>Get<br />data<Chevron /></ToolText>
            </Tool>
            <Tool $w={56} $dx={1}>
              <Icon><Doc /><path d="M16 17h14v14H16z" fill="#107c41" stroke="none" /><path d="M20 20l6 8M26 20l-6 8" stroke="#fff" strokeWidth="2" /></Icon>
              <ToolText>Excel<br />workbook</ToolText>
            </Tool>
            <Tool $w={63} $dx={-0.5}>
              <Icon><circle cx="16" cy="16" r="12.500" strokeWidth="1.800" /><path d="M4 21C0 14 4 9 9 8c1-5 6-7 11-5-2 1-4 3-5 5 0 6 3 11 7 15 1 1-3 4-6 3-5 0-10-1-12-5z" fill="#d0d0d0" strokeWidth="1" /><path d="M11 8c0 6 4 12 9 14 5-2 8-6 8-10M12 9c-1 8 4 14 9 15" stroke="#292929" /><path d="M19 22c5-1 9-4 9-8" /></Icon>
              <ToolText $ls={-0.35}>OneLake<br />data hub<Chevron /></ToolText>
            </Tool>
            <Tool $w={40} $dx={1}>
              <Icon><Doc /><path d="M17.500 17v11c0 3 12 3 12 0V17" stroke="#f7b668" fill="#292929" strokeWidth="1.500" /><ellipse cx="23.500" cy="17" rx="6" ry="2.500" stroke="#f7b668" fill="#292929" strokeWidth="1.500" /></Icon>
              <ToolText>SQL<br />Server</ToolText>
            </Tool>
            <Tool $w={41} $dx={-1}>
              <Icon><path d="M10 1h18v5H10z" fill="#666" stroke="none" /><path d="M10 1.500h18.500v27H.5V12M8 10.500h20M.5 19.500h28M10.500 12v17M19.500 6v23" /><path d="M6.500-1v15M-1 6.500h15" stroke="#5fd97a" strokeWidth="1.500" /></Icon>
              <ToolText>Enter<br />data</ToolText>
            </Tool>
            <Tool $w={55}>
              <Icon><g strokeWidth="1.600"><path d="M10 25.500C2 26 0 18 2 12c2-7 11-9 18-5 5 3 6 9 3 13-3 4-9 4-11 1s-1-7 3-8" /><path d="M20 3.500c8-.5 10 7.500 8 13.500-2 7-11 9-18 5-5-3-6-9-3-13 3-4 9-4 11-1s1 7-3 8" /></g></Icon>
              <ToolText>Dataverse</ToolText>
            </Tool>
            <Tool $w={58} $dx={1.5}>
              <Icon><Doc /><circle cx="22.500" cy="23" r="7" stroke="#5ba7e0" strokeWidth="1.600" fill="#292929" /><path d="M22.500 18.500V23.500h4" /></Icon>
              <ToolText>Recent<br />sources<Chevron /></ToolText>
            </Tool>
          </GroupTools>
          <GroupName>Data</GroupName>
        </Group>

        <Group $w={117}>
          <GroupTools $pl={9}>
            <Tool $w={53} $dx={1}>
              <Icon><path d="M1 1h27v5H1z" fill="#666" stroke="none" /><path d="M12 28.500H.5V1.500h28V10M.5 6.500h28M.5 13.500h20M.5 21h14M9.500 6v22M18.500 6v10" />{pencil}</Icon>
              <ToolText $ls={-0.65}>Transform<br />data<Chevron /></ToolText>
            </Tool>
            <Tool $w={48} $dx={1}>
              <Icon><Doc /><path d="M15.500 22a6.500 6.500 0 0 1 12-3M28.500 24a6.500 6.500 0 0 1-12 3M28 15v4.500h-4.500M16 31v-4.500h4.500" stroke="#5fd97a" strokeWidth="1.500" /></Icon>
              <ToolText>Refresh</ToolText>
            </Tool>
          </GroupTools>
          <GroupName>Queries</GroupName>
        </Group>

        <Group $w={147}>
          <GroupTools $pl={8}>
            <Tool $w={39} $dx={1}>
              <Icon><path d="M2 12.500h7v16H2z" fill={B} stroke={C} /><path d="M17 6.500h7v22h-7z" fill="#666" stroke="#999" /><path d="M9.500 1.500h7v27h-7z" /><path d="M21.500 15v15M14 22.500h15" stroke="#5fd97a" strokeWidth="1.500" /></Icon>
              <ToolText>New<br />visual</ToolText>
            </Tool>
            <Tool $w={41}>
              <Icon><path d="M1.500 3.500h27v23h-27z" /><path d="M0 2h3v3H0zM27 2h3v3h-3zM0 25h3v3H0zM27 25h3v3h-3z" fill="#3a96dd" stroke="none" /><path d="M9.500 22L15 8l5.500 14M11.500 17.500h7" stroke="#5ba7e0" strokeWidth="1.700" /></Icon>
              <ToolText>Text<br />box</ToolText>
            </Tool>
            <Tool $w={50} $dx={1}>
              <Icon><path d="M2.500 12.500h7v16h-7zM9.500 28.500V1.500h7v17M16.500 6.500h7v5M16 28.500h8v-9" />{pencil}</Icon>
              <ToolText>More<br />visuals<Chevron /></ToolText>
            </Tool>
          </GroupTools>
          <GroupName>Insert</GroupName>
        </Group>

        <Group $w={188}>
          <GroupTools $pl={8}>
            <Tool $w={72} $dim $dx={1}>
              <Icon o={0.55}><path d="M2 12.500h7v16H2z" fill="#444" /><path d="M9.500 1.500h7v27h-7z" /><path d="M17 6.500h7v8h-7z" fill="#174a75" stroke="#2f6a96" /><text x="13" y="26" fontFamily="Liberation Serif" fontStyle="italic" fontSize="20" fill="#fff" stroke="none">fx</text></Icon>
              <ToolText $ls={-0.3}>New visual<br />calculation<Chevron /></ToolText>
            </Tool>
            <Tool $w={50} $dx={-1}>
              <Icon><path d="M6.500 1.500h18v27h-18z" /><path d="M9.500 4.500h12v4h-12z" fill={B} stroke={C} /><path d="M9 12.500h13M9 18.500h13M9 24.500h13" strokeWidth="3" strokeDasharray="3 2" /></Icon>
              <ToolText>New<br />measure</ToolText>
            </Tool>
            <Tool $w={49} $dx={-1}>
              <Icon><path d="M10 1.500h14.500v27H8.500V16" /><path d="M13 4.500h8v4h-9" fill="#777" /><path d="M11 12.500h11M11 18.500h11M11 24.500h11" strokeWidth="3" strokeDasharray="3 1.500" /><path d="M3-1h10L9 8h4L1 21l4-10H0z" fill="#f0a02c" stroke="#f9c46b" strokeWidth=".8" /></Icon>
              <ToolText>Quick<br />measure</ToolText>
            </Tool>
          </GroupTools>
          <GroupName>Calculations</GroupName>
        </Group>

        <Group $w={74}>
          <GroupTools $pl={0}>
            <Tool $w={73} $dim $dx={1}>
              <Icon><g stroke="#2c5878"><path d="M22 20v8.500H4.500V1.500H17" /><path d="M8 19L19 8l5 5-11 11zM11 15l6 6M14 12l6 6M19 8l2-5 3-1 1 4 3 1-3 4-2 2" strokeWidth="1.700" fill="#21394a" /></g></Icon>
              <ToolText $ls={-0.2}>Sensitivity<br /><Chevron /></ToolText>
            </Tool>
          </GroupTools>
          <GroupName>Sensitivity</GroupName>
        </Group>
        <Group $w={59}>
          <GroupTools $pl={0}>
            <Tool $w={58}>
              <Icon><path d="M4.500 30V19q0-1.500 1.500-1.500h7q1.500 0 1.500 1.500v11zM9.500 17v-6q0-1.500 1.500-1.500h7M14.500 29.500H20M19.500 26V11q0-1.500-1.500-1.500h-4.500V4q0-1.500 1.500-1.500h7q1.500 0 1.500 1.500v12" /><path d="M24.500 32V18M19.500 23l5-6 5 6" stroke="#5ba7e0" strokeWidth="1.500" /></Icon>
              <ToolText>Publish</ToolText>
            </Tool>
          </GroupTools>
          <GroupName>Share</GroupName>
        </Group>
        <Group $w={60}>
          <GroupTools $pl={0}>
            <Tool $w={59} $dx={-1}>
              <Icon>
                <defs>
                  <linearGradient id="ca" x1="0" y1="0" x2="0" y2="1"><stop offset="0" stopColor="#1aa5f5" /><stop offset=".55" stopColor="#3fc07a" /><stop offset="1" stopColor="#f6c51c" /></linearGradient>
                  <linearGradient id="cb" x1="0" y1="0" x2="0" y2="1"><stop offset="0" stopColor="#a44cf0" /><stop offset=".5" stopColor="#f0588c" /><stop offset="1" stopColor="#fb8b4c" /></linearGradient>
                </defs>
                <g stroke="none">
                  <path d="M8 3h12q3 0 4 4l1 3h-5q-3 0-4 4l-2 7q-1 3-4 3H4q-4 0-3-5L4 7q1-4 4-4z" fill="url(#ca)" />
                  <path d="M17 3h4q3 0 4 4l1 3h-6q0-5-3-7z" fill="#1457c8" />
                  <path d="M22 10h4q5 0 4 5l-3 10q-1 4-5 4H11q-3 0-4-5h4q3 0 4-3l2-7q1-4 5-4z" fill="url(#cb)" />
                </g>
              </Icon>
              <ToolText>Copilot</ToolText>
            </Tool>
          </GroupTools>
          <GroupName>Copilot</GroupName>
        </Group>
      </Ribbon>

      <Body>
        <Rail>
          <svg width="14" height="160" fill="none" stroke="#dcdcdc"><path d="M0 14.500V26M0 26.500h2" stroke="#fff" strokeWidth="2" /><path d="M-1 52.500h3.500v14H-1M-1 57.500h3M-1 62h3" /><path d="M-1 91.500h4.500v7H-1M-1 101.500h4.500v7H-1M-1 95h4M-1 105h4" /><path d="M0 138q2 1 1.500 6T-1 147" /></svg>
        </Rail>
        <Center>
          <Work>
            <Canvas>
              <Page>
                <LeftCol>
                  <Cloud><WordCloud /></Cloud>
                  <Card $w={677} $h={333} $dark>
                    <CardTitle $pl={5}>Number of viewers as per Subtitle Count</CardTitle>
                    <SubtitleChart />
                    <HeaderTools>
                      <HeaderBtn><svg width="24" height="23" stroke="#605e5c"><path d="M6 7.500h12M8 11.500h8M10.500 15.500h3" /></svg></HeaderBtn>
                      <HeaderBtn><svg width="24" height="23" fill="none" stroke="#605e5c"><path d="M10 7.500H8q-1.500 0-1.500 1.500v7.500q0 1.500 1.500 1.500h8q1.500 0 1.500-1.500V13M13 6.500h5v5M18 6.500l-5 5M7 12.500h3.500q1.500 0 1.500 1.500v4" /></svg></HeaderBtn>
                      <HeaderBtn><svg width="24" height="23" fill="#605e5c"><circle cx="8" cy="11.500" r="1.400" /><circle cx="12" cy="11.500" r="1.400" /><circle cx="16" cy="11.500" r="1.400" /></svg></HeaderBtn>
                    </HeaderTools>
                  </Card>
                  <Slicer>
                    <SlicerName>Sub-Category</SlicerName>
                    <Tiles>
                      <Tile $on>{"Animal\nHealth"}</Tile>
                      <Tile>Basic Science</Tile>
                      <Tile>Biology</Tile>
                      <Tile>{"Health\nInformatics"}</Tile>
                      <Tile>{"Healthcare\nManagement"}</Tile>
                      <Tile>Nutrition</Tile>
                      <svg width="20" height="20" fill="none" stroke="#777" strokeWidth="1.200"><path d="M7 2l8 8-8 8" /></svg>
                    </Tiles>
                  </Slicer>
                  <Card $w={523} $h={332} $ml={15}>
                    <CardTitle $pl={4}>Instructor_rating by Instructors.</CardTitle>
                    <RatingChart />
                  </Card>
                </LeftCol>
                <RightCol>
                  <Blank />
                  <Card $w={580} $h={305}>
                    <CardTitle $pl={5}>Viewership on the Basis of Lecture duration.</CardTitle>
                    <DurationChart />
                  </Card>
                  <Sheet>
                    <Matrix>
                      <Cell $ls={0} $bottom={selection} $right={grey}><ColHead>Category</ColHead></Cell>
                      <Cell $ls={0.05} $bottom={selection} $right={grey}><ColHead>{"Average of Count\nof Skills Provided."}</ColHead></Cell>
                      <Cell $ls={0} $bottom={selection}><ColHead>Average of Duration in Hours</ColHead></Cell>
                      <Cell $ls={-0.7} $pl={7} $bottom={grey} $right={selection}><RowHead><svg width="15" height="15" fill="none" stroke="#b8b8b8"><rect x=".7" y=".7" width="13.500" height="13.500" rx="1.500" /><path d="M7.500 3.500v8M3.500 7.500h8" /></svg>Health</RowHead></Cell>
                      <Cell $white $num $bottom={grey} $right={grey}>3.02</Cell>
                      <Cell $white $num $bottom={grey}>51.13</Cell>
                      <Cell $ls={-0.8} $pl={34} $bold $right={selection}>Total</Cell>
                      <Cell $num $bold $ls={0.5} $right={grey}>3.02</Cell>
                      <Cell $num $bold $ls={0.5}>51.13</Cell>
                    </Matrix>
                  </Sheet>
                </RightCol>
              </Page>
            </Canvas>
            <Scroll><Thumb /></Scroll>
            <Filters>
              <svg width="9" height="8" fill="none" stroke="#252423" strokeWidth="1.400"><path d="M4 .7L1.200 4 4 7.300M7.700.7L5 4l2.700 3.300" /></svg>
              <FilterGlyph width="9" height="10" fill="none" stroke="#44446a"><path d="M7.500.5v9M4.500 2v5.500M1.500 4v2" /></FilterGlyph>
              <FiltersText>Filters</FiltersText>
            </Filters>
          </Work>
          <Footer>
            <ViewBtns>
              <svg width="127" height="34" fill="none" stroke="#fff" strokeWidth="1.500">
                <rect x="14.700" y="7.700" width="14" height="11" rx="2" /><path d="M19.500 19v3M24 19v3M17 22.200h10" />
                <path d="M11.500 30.500h21" stroke="#2bac93" strokeWidth="3" strokeLinecap="round" />
                <rect x="61.700" y="6.700" width="9" height="17" rx="1.500" /><path d="M64.500 20.500h3.500" strokeWidth="1.200" />
                <path d="M98.500 14.500v7l-4-3.500zM116 14.500v7l3.500-3.500z" stroke="#c8c8c8" strokeWidth="1" />
              </svg>
            </ViewBtns>
            <PageTab>Courses Analysis</PageTab>
            <AddTab><svg width="39" height="34" stroke="#1f2a28" strokeWidth="2.600"><path d="M19.500 11v11M14 16.500h11" /></svg></AddTab>
          </Footer>
        </Center>
        <Viz>
          <VizHead>Visualizations<svg width="9" height="8" fill="none" stroke="#fff" strokeWidth="1.700"><path d="M1.200.7L4 4 1.200 7.300M4.700.7L7.500 4 4.700 7.300" /></svg></VizHead>
          <VizSub>Build visual</VizSub>
          <svg width="180" height="45" fill="none">
            <rect x="8" y="0" width="32" height="32" rx="1" fill="#292929" />
            <path d="M12 4.500h20" stroke="#aaa" />
            <path d="M13 10h22v6H13zM13 21h22v6H13z" fill="#2bac93" stroke="#e0e0e0" strokeDasharray="1.500 1.500" />
            <path d="M88 27.500H78.500V4.500h11l5.500 6" stroke={L} /><path d="M89 4.500v6h6z" fill="#fff" />
            <path d="M101 12l-8 9 2 2 7-10zM92 21c-3 0-2 4-6 6 4 1 8 0 9-4z" stroke="#b0b0b0" />
            <path d="M0 44.500h16.500L24 37l7.500 7.500H180" stroke="#6a6a6a" />
          </svg>
          <VizGrid>{gallery.map((g, i) => <VizIcon key={i}>{g}</VizIcon>)}</VizGrid>
          <More><svg width="40" height="12" fill="#fff"><path d="M15 9h2v2h-2zM19 9h2v2h-2zM23 9h2v2h-2z" /></svg></More>
          <Dash />
          <CloudRow>
            <svg width="18" height="14" fill="none" stroke={L} strokeWidth="1.300"><path d="M4 13C-1 13 0 6.500 4 6.500 5-.5 13-.5 14 6c5 0 5 7 0 7z" /><path d="M5.500 6l1.700 5L9 7l1.800 4 1.700-5" stroke="#5a93c8" /></svg>
          </CloudRow>
          <FieldLabel $mt={9}>Values</FieldLabel>
          <Well $mt={5}>Add data fields here</Well>
          <FieldLabel $mt={11} $b>Drill through</FieldLabel>
          <Switches>
            <SwitchRow>Cross-report<Switch>Off</Switch></SwitchRow>
            <SwitchRow>Keep all filters<Switch $on>On</Switch></SwitchRow>
          </Switches>
          <Well $black $mt={5}>Add drill-through fields here</Well>
        </Viz>
      </Body>
    </Shell>
  );
}
